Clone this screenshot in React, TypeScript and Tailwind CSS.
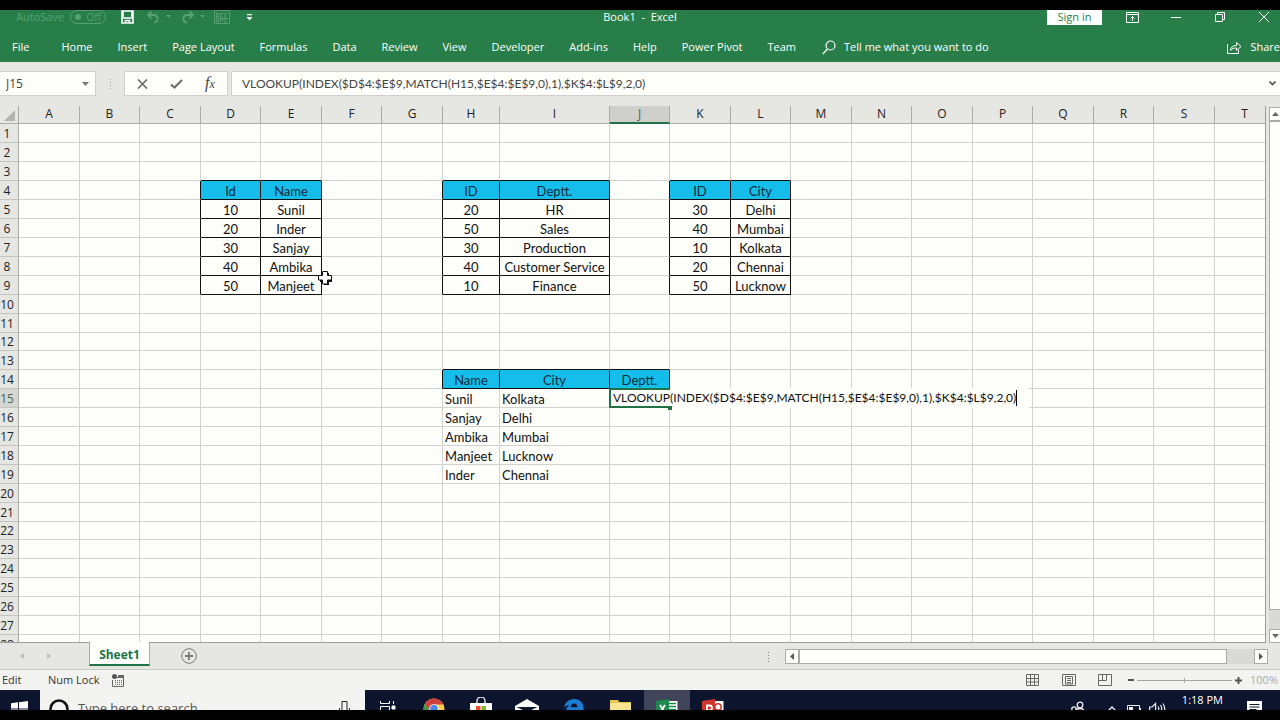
import React, { useState } from 'react';

const FORMULA = 'VLOOKUP(INDEX($D$4:$E$9,MATCH(H15,$E$4:$E$9,0),1),$K$4:$L$9,2,0)';

const MENU = ['Home', 'Insert', 'Page Layout', 'Formulas', 'Data', 'Review', 'View', 'Developer', 'Add-ins', 'Help', 'Power Pivot', 'Team'];

const COLUMNS: [string, string][] = [
  ['A', 'w-[61px]'],
  ['B', 'w-[60px]'],
  ['C', 'w-[61px]'],
  ['D', 'w-[60px]'],
  ['E', 'w-[61px]'],
  ['F', 'w-[60px]'],
  ['G', 'w-[61px]'],
  ['H', 'w-[57px]'],
  ['I', 'w-[110px]'],
  ['J', 'w-[60px]'],
  ['K', 'w-[61px]'],
  ['L', 'w-[60px]'],
  ['M', 'w-[61px]'],
  ['N', 'w-[60px]'],
  ['O', 'w-[61px]'],
  ['P', 'w-[60px]'],
  ['Q', 'w-[61px]'],
  ['R', 'w-[60px]'],
  ['S', 'w-[61px]'],
  ['T', 'w-[60px]'],
];

type Block = { col: number; row: number; boxed: boolean; data: string[][] };

// First row of every block is its header
const BLOCKS: Block[] = [
  { col: 3, row: 4, boxed: true, data: [['Id', 'Name'], ['10', 'Sunil'], ['20', 'Inder'], ['30', 'Sanjay'], ['40', 'Ambika'], ['50', 'Manjeet']] },
  { col: 7, row: 4, boxed: true, data: [['ID', 'Deptt.'], ['20', 'HR'], ['50', 'Sales'], ['30', 'Production'], ['40', 'Customer Service'], ['10', 'Finance']] },
  { col: 10, row: 4, boxed: true, data: [['ID', 'City'], ['30', 'Delhi'], ['40', 'Mumbai'], ['10', 'Kolkata'], ['20', 'Chennai'], ['50', 'Lucknow']] },
  { col: 7, row: 14, boxed: false, data: [['Name', 'City', 'Deptt.'], ['Sunil', 'Kolkata'], ['Sanjay', 'Delhi'], ['Ambika', 'Mumbai'], ['Manjeet', 'Lucknow'], ['Inder', 'Chennai']] },
];

function getCell(col: number, row: number) {
  for (const b of BLOCKS) {
    const text = b.data[row - b.row]?.[col - b.col];
    if (text !== undefined) {
      const header = row === b.row;
      return { text, header, boxed: header || b.boxed };
    }
  }
  return { text: '', header: false, boxed: false };
}

function TitleBar() {
  return (
    <div className="h-[14px] flex items-center text-[11px] relative">
      <div className="flex items-center pl-4 text-[#57a074]">
        <span className="w-[54px]">AutoSave</span>
        <button className="flex items-center justify-between w-9 h-[14px] rounded-full border border-[#57a074] pl-1 pr-1 text-[10px] leading-none">
          <span className="size-[6px] rounded-full bg-[#57a074]" />
          Off
        </button>
      </div>
      <button aria-label="Save" className="ml-[15px]">
        <svg width="13" height="14" viewBox="0 0 13 14" fill="none" stroke="#fff" strokeWidth="1.6">
          <path d="M1 1h11v12H1zM1 8h11M4.500 13V10.500h4V13" />
          <path d="M2 1v6M11 1v6" />
        </svg>
      </button>
      <button aria-label="Undo" className="ml-3 flex items-center gap-1">
        <svg width="16" height="14" viewBox="0 0 16 14" fill="none" stroke="#57a074" strokeWidth="1.8">
          <path d="M5.500 1.500 2 5l3.500 3.500M2 5h6.500a3.800 3.800 0 0 1 0 7.500H8" />
        </svg>
        <svg width="6" height="4" viewBox="0 0 6 4" fill="#57a074"><path d="M0 0h5L2.500 3z" /></svg>
      </button>
      <button aria-label="Redo" className="ml-2 flex items-center gap-1">
        <svg width="16" height="14" viewBox="0 0 16 14" fill="none" stroke="#57a074" strokeWidth="1.8">
          <path d="M9.500 1.500 13 5l-3.500 3.500M13 5H6.500a3.800 3.800 0 0 0 0 7.500H7" />
        </svg>
        <svg width="6" height="4" viewBox="0 0 6 4" fill="#57a074"><path d="M0 0h5L2.500 3z" /></svg>
      </button>
      <button aria-label="Insert cells" className="ml-2">
        <svg width="16" height="14" viewBox="0 0 16 14" fill="none" stroke="#57a074">
          <path d="M.5.5h15v13H.5zM2.500 3h2v2h-2zM2.500 6.500h2V12h-2zM6.500 3v9M6.500 3.500h3M13 3.500h-2v7M9 8.500h5M9.500 10.500 11 12.500l1.500-2M8 6.500v4" />
        </svg>
      </button>
      <button aria-label="Customize toolbar" className="ml-4">
        <svg width="7" height="7" viewBox="0 0 7 7" fill="#fff"><path d="M1 0h5v1.300H1zM.5 3h6L3.500 6.500z" /></svg>
      </button>
      <h1 className="absolute left-1/2 -translate-x-1/2 whitespace-pre">Book1  -  Excel</h1>
      <div className="ml-auto flex items-center pr-[11px]">
        <button className="w-[55px] h-[15px] bg-white text-[#287e48] leading-[14px]">Sign in</button>
        <button aria-label="Ribbon display options" className="ml-6">
          <svg width="13" height="11" viewBox="0 0 13 11" fill="none" stroke="#fff">
            <path d="M.5.5h12v10H.5zM.5 2.500h12M6.500 9V4.500M4.500 6.500l2-2 2 2" />
          </svg>
        </button>
        <button aria-label="Minimize" className="ml-8">
          <svg width="10" height="10" viewBox="0 0 10 10" stroke="#fff"><path d="M0 5.500h10" /></svg>
        </button>
        <button aria-label="Restore" className="ml-[34px]">
          <svg width="10" height="10" viewBox="0 0 10 10" fill="none" stroke="#fff"><path d="M.5 2.500h7v7h-7zM2.500 2.500v-2h7v7h-2" /></svg>
        </button>
        <button aria-label="Close" className="ml-[34px]">
          <svg width="10" height="10" viewBox="0 0 10 10" stroke="#fff"><path d="M0 0l10 10M10 0 0 10" /></svg>
        </button>
      </div>
    </div>
  );
}

function MenuBar() {
  return (
    <nav className="mt-2 h-[30px] pt-px flex items-center text-[11px] whitespace-nowrap">
      <button className="pl-3 pr-4">File</button>
      <div className="flex pl-4 gap-[25px]">
        {MENU.map((m) => (
          <button key={m}>{m}</button>
        ))}
      </div>
      <button className="ml-[26px] flex items-center gap-2">
        <svg width="14" height="15" viewBox="0 0 14 15" fill="none" stroke="#fff" strokeWidth="1.200">
          <circle cx="8.500" cy="5.500" r="4.500" />
          <path d="M5.500 9 .8 14" />
        </svg>
        Tell me what you want to do
      </button>
      <button className="ml-auto flex items-center gap-2">
        <svg width="15" height="13" viewBox="0 0 15 13" fill="none" stroke="#fff">
          <path d="M.5 3v9.500h11V9M3.500 9.500c.3-3.500 2.500-5 6-5V1.500L14 5.500l-4.500 4V7c-3 0-4.500.5-6 2.500z" />
        </svg>
        Share
      </button>
    </nav>
  );
}

function FormulaBar({ value, onChange }: { value: string; onChange: (v: string) => void }) {
  return (
    <div className="flex items-stretch h-[25px] mt-[9px] text-[#444]">
      <div className="flex items-center w-24 bg-[#fefefa] border border-l-0 border-[#cfcfcd]">
        <input aria-label="Name box" defaultValue="J15" className="w-[82px] pl-[6px] text-xs outline-none" />
        <svg width="7" height="4" viewBox="0 0 7 4" fill="#777"><path d="M0 0h7L3.500 4z" /></svg>
      </div>
      <div className="w-7 flex flex-col items-center justify-center gap-[2px]">
        <span className="size-px bg-[#999]" />
        <span className="size-px bg-[#999]" />
        <span className="size-px bg-[#999]" />
        <span className="size-px bg-[#999]" />
      </div>
      <div className="flex items-center w-[104px] bg-[#fefefa] border border-[#cfcfcd]">
        <button aria-label="Cancel" className="flex-1 flex justify-center">
          <svg width="11" height="10" viewBox="0 0 11 10" stroke="#6e6e6e" strokeWidth="1.700"><path d="M1 .5 10 9.500M10 .5 1 9.500" /></svg>
        </button>
        <button aria-label="Enter" className="flex-1 flex justify-center">
          <svg width="13" height="10" viewBox="0 0 13 10" fill="none" stroke="#6e6e6e" strokeWidth="2.200"><path d="M1 5.500 4.500 8.500 12 1" /></svg>
        </button>
        <button aria-label="Insert function" className="flex-1 font-['Liberation_Serif',serif] italic text-base leading-none">
          f<span className="text-xs">x</span>
        </button>
      </div>
      <div className="ml-[3px] flex-1 flex items-center bg-[#fefefa] border border-r-0 border-[#cfcfcd]">
        <input
          aria-label="Formula bar"
          value={value}
          onChange={(e) => onChange(e.target.value)}
          className="flex-1 pl-[10px] pt-px font-['Lato',sans-serif] text-xs outline-none"
        />
        <button aria-label="Expand formula bar" className="pr-1">
          <svg width="7" height="5" viewBox="0 0 7 5" fill="none" stroke="#555" strokeWidth="1.600"><path d="M.5.5l3 3 3-3" /></svg>
        </button>
      </div>
    </div>
  );
}

function CellEditor({ value, onChange }: { value: string; onChange: (v: string) => void }) {
  return (
    <div className="absolute -left-px -top-px z-10 h-5 flex items-center bg-[#fefefa] pr-3">
      <div className="absolute left-0 top-0 w-[61px] h-5 border-2 border-r-0 border-[#217346]" />
      <span className="absolute left-[59px] top-[18px] size-1 bg-[#217346]" />
      <input
        aria-label="Cell J15"
        value={value}
        onChange={(e) => onChange(e.target.value)}
        className="relative field-sizing-content pl-[4px] text-xs leading-4 outline-none"
      />
      <span className="w-px h-4 bg-black" />
    </div>
  );
}

function CrossCursor() {
  return (
    <svg className="absolute -left-1 -top-[5px] z-10" width="15" height="15" viewBox="0 0 15 15">
      <path d="M6 2h5v4h3v5h-3v3H6v-3H2V6h4z" fill="#111" />
      <path d="M4.500.5h5v4h4v4.500h-4v4h-5v-4h-4V4.500h4z" fill="#fff" stroke="#111" />
    </svg>
  );
}

function Grid({ value, onChange }: { value: string; onChange: (v: string) => void }) {
  return (
    <div className="flex-1 min-w-0 overflow-hidden border-r border-b border-[#9b9b9b] bg-[#fefefa]">
      <table className="table-fixed w-0 border-separate border-spacing-0">
        <thead>
          <tr className="h-[18px] bg-[#e6e6e3] text-xs">
            <th className="w-[19px] p-0 border-r border-b border-[#ababab] align-bottom">
              <svg className="ml-auto mr-[3px] mb-[2px]" width="11" height="11" viewBox="0 0 11 11" fill="#b4b4b2"><path d="M11 0v11H0z" /></svg>
            </th>
            {COLUMNS.map(([name, width]) => (
              <th
                key={name}
                className={`${width} p-0 font-normal leading-4 border-r border-b align-top ${
                  name === 'J' ? 'bg-[#cfcfcc] text-[#3f6b51] border-r-[#ababab] border-b-[#217346] border-b-2' : 'border-[#ababab] text-[#222]'
                }`}
              >
                {name}
              </th>
            ))}
          </tr>
        </thead>
        <tbody>
          {Array.from({ length: 28 }, (_, i) => i + 1).map((row) => (
            <tr key={row} className={row === 12 || row === 22 ? 'h-[18px]' : 'h-[19px]'}>
              <th
                className={`p-0 pt-px pr-1 text-center text-xs font-normal leading-4 border-r border-b border-[#c4c4c2] border-r-[#ababab] ${
                  row === 15 ? 'bg-[#d6d6d3] text-[#3f6b51]' : 'bg-[#e6e6e3] text-[#222]'
                }`}
              >
                {row}
              </th>
              {COLUMNS.map(([name], col) => {
                const cell = getCell(col, row);
                const right = cell.boxed || getCell(col + 1, row).boxed;
                const bottom = cell.boxed || getCell(col, row + 1).boxed;
                return (
                  <td
                    key={name}
                    className={`p-0 pt-px relative font-['Lato',sans-serif] text-[13px] leading-4 whitespace-nowrap border-r border-b ${
                      right ? 'border-r-[#111]' : 'border-r-[#d2d2cf]'
                    } ${bottom ? 'border-b-[#111]' : 'border-b-[#d2d2cf]'} ${cell.header ? 'bg-[#14bdea] text-[#0d2b3a]' : 'text-[#111]'} ${
                      cell.boxed ? 'text-center' : 'pl-[2px]'
                    }`}
                  >
                    {cell.text}
                    {name === 'J' && row === 15 && <CellEditor value={value} onChange={onChange} />}
                    {name === 'F' && row === 9 && <CrossCursor />}
                  </td>
                );
              })}
            </tr>
          ))}
        </tbody>
      </table>
    </div>
  );
}

function VerticalScroll() {
  return (
    <div className="w-[14px] pl-[3px] flex flex-col overflow-hidden">
      <button aria-label="Scroll up" className="w-[13px] h-[14px] mt-px flex items-center justify-center bg-[#fefefa] border border-[#ababab]">
        <svg width="7" height="4" viewBox="0 0 7 4" fill="#666"><path d="M0 4h7L3.500 0z" /></svg>
      </button>
      <div className="w-[13px] flex-1 bg-[#d9d9d6] pb-[19px]">
        <div className="h-full bg-[#fefefa] border border-[#ababab]" />
      </div>
      <button aria-label="Scroll down" className="w-[13px] h-[14px] flex items-center justify-center bg-[#fefefa] border border-[#ababab]">
        <svg width="7" height="4" viewBox="0 0 7 4" fill="#666"><path d="M0 0h7L3.500 4z" /></svg>
      </button>
    </div>
  );
}

function SheetTabs() {
  return (
    <div className="h-[26px] flex items-start">
      <div className="w-[89px] h-[25px] flex items-center pl-5 gap-[22px]">
        <svg width="5" height="6" viewBox="0 0 5 6" fill="#bdbdbb"><path d="M4 0v6L0 3z" /></svg>
        <svg width="5" height="6" viewBox="0 0 5 6" fill="#bdbdbb"><path d="M0 0v6l4-3z" /></svg>
      </div>
      <button className="w-[61px] h-6 -mt-px pt-1 bg-[#fefefa] border-x border-[#ababab] border-b-2 border-b-[#217346] text-[#217346] text-xs font-bold">Sheet1</button>
      <button aria-label="New sheet" className="ml-[31px] mt-[5px]">
        <svg width="16" height="16" viewBox="0 0 16 16" fill="none" stroke="#7a7a7a">
          <circle cx="8" cy="8" r="7.300" />
          <path d="M8 4v8M4 8h8" strokeWidth="1.800" />
        </svg>
      </button>
      <div className="ml-auto mt-[6px] flex items-center">
        <div className="flex flex-col gap-[2px] mr-4">
          <span className="size-px bg-[#888]" />
          <span className="size-px bg-[#888]" />
          <span className="size-px bg-[#888]" />
          <span className="size-px bg-[#888]" />
        </div>
        <button aria-label="Scroll left" className="w-[14px] h-[15px] flex items-center justify-center bg-[#fefefa] border border-[#ababab]">
          <svg width="4" height="7" viewBox="0 0 4 7" fill="#555"><path d="M4 0v7L0 3.500z" /></svg>
        </button>
        <div className="w-[455px] h-[15px] bg-[#d9d9d6] pr-[27px]">
          <div className="h-full bg-[#fefefa] border border-[#ababab]" />
        </div>
        <button aria-label="Scroll right" className="w-[14px] h-[15px] mr-3 flex items-center justify-center bg-[#fefefa] border border-[#ababab]">
          <svg width="4" height="7" viewBox="0 0 4 7" fill="#555"><path d="M0 0v7l4-3.500z" /></svg>
        </button>
      </div>
    </div>
  );
}

function StatusBar() {
  return (
    <div className="h-[21px] flex items-center bg-[#f3f3f1] border-t border-[#c9c9c6] text-[11px] text-[#333]">
      <span className="w-12 pl-[2px]">Edit</span>
      <span className="w-16">Num Lock</span>
      <svg width="12" height="13" viewBox="0 0 12 13" fill="none">
        <path d="M5 3.500h6.500v9H.5V6" stroke="#666" />
        <path d="M6 1h6v3H6z" fill="#666" />
        <path d="M3 6.500h7M3 8.500h7M3 10.500h7" stroke="#666" strokeDasharray="1 1" />
        <circle cx="2.500" cy="2.500" r="2.500" fill="#555" />
      </svg>
      <div className="ml-auto flex items-center pr-[2px]">
        <button aria-label="Normal view">
          <svg width="13" height="12" viewBox="0 0 13 12" fill="none" stroke="#666"><path d="M.5.5h12v11H.5zM4.500.5v11M8.500.5v11M.5 4.500h12M.5 8h12" /></svg>
        </button>
        <button aria-label="Page layout view" className="ml-[23px]">
          <svg width="14" height="12" viewBox="0 0 14 12" fill="none" stroke="#666"><path d="M.5.5h13v11H.5zM3.500 2.500h7v7.500h-7zM5 4.500h4M5 6.500h4M5 8.500h4" /></svg>
        </button>
        <button aria-label="Page break view" className="ml-[22px]">
          <svg width="14" height="12" viewBox="0 0 14 12" fill="none" stroke="#666"><path d="M.5.5h13v11H.5zM4.500.5v6M.5 6.500h8v-6" /></svg>
        </button>
        <button aria-label="Zoom out" className="ml-4 w-[6px] h-[2px] bg-[#555]" />
        <div className="mx-[3px] w-[95px] h-px bg-[#a5a5a3] flex items-center justify-center">
          <span className="w-px h-[5px] shrink-0 bg-[#a5a5a3]" />
        </div>
        <button aria-label="Zoom in">
          <svg width="7" height="7" viewBox="0 0 7 7" stroke="#555" strokeWidth="2"><path d="M3.500 0v7M0 3.500h7" /></svg>
        </button>
        <span className="ml-2 text-[#a9a9a7]">100%</span>
      </div>
    </div>
  );
}

const ICON = 'w-[46px] h-full flex items-center justify-center';

function Taskbar() {
  return (
    <div className="h-5 overflow-hidden bg-[#0d142e]">
      <div className="h-[38px] flex items-stretch">
        <button aria-label="Start" className="w-10 flex items-center justify-center pr-[6px]">
          <svg className="ml-1" width="17" height="16" viewBox="0 0 17 16" fill="#fff">
            <path d="M0 2.300 7 1.300v6.200H0zM8 1.200 17 0v7.500H8zM0 8.500h7v6.200L0 13.700zM8 8.500h9V16l-9-1.200z" />
          </svg>
        </button>
        <div className="w-[325px] flex items-center bg-[#f3f3f1] pl-2">
          <svg width="22" height="22" viewBox="0 0 22 22" fill="none" stroke="#111" strokeWidth="2.600"><circle cx="11" cy="11" r="8.500" /></svg>
          <input aria-label="Search" placeholder="Type here to search" className="ml-2 flex-1 text-[13px] placeholder:text-[#555] outline-none" />
          <svg className="mr-[15px]" width="11" height="18" viewBox="0 0 11 18" fill="none" stroke="#222"><path d="M3 1.500h5v9H3zM.5 8v4.500h10V8M5.500 12.500V17" /></svg>
        </div>
        <div className="w-[371px] flex justify-between">
          <button aria-label="Task view" className={ICON}>
            <svg width="16" height="16" viewBox="0 0 16 16" fill="none" stroke="#fff"><path d="M.5 0v2.500h9V0M.5 5.500h9v6h-9zM.5 16v-2.500h9V16M13.500 0v3M13.500 10v6" /><path d="M12 5h3v3h-3z" fill="#fff" /></svg>
          </button>
          <button aria-label="Chrome" className={ICON}>
            <svg width="22" height="22" viewBox="0 0 22 22">
              <circle cx="11" cy="11" r="10.500" fill="#f7cf45" />
              <path d="M1.900 5.750A10.500 10.500 0 0 1 20.500 6.500H11L6.800 13.500z" fill="#d0403c" />
              <path d="M1.900 5.750A10.500 10.500 0 0 0 10 21.500l5-8.200-8.500-.5z" fill="#3d9b4f" />
              <circle cx="11" cy="11" r="4.800" fill="#fff" />
              <circle cx="11" cy="11" r="3.900" fill="#4a86ec" />
            </svg>
          </button>
          <button aria-label="Store" className={ICON}>
            <svg width="22" height="24" viewBox="0 0 22 24">
              <path d="M7 7V4a4 4 0 0 1 8 0v3" fill="none" stroke="#ddd" strokeWidth="1.500" />
              <path d="M0 6h22v15l-22 2z" fill="#fff" />
              <path d="M6 9h4.500v4.500H6z" fill="#e8502a" /><path d="M11.500 9H16v4.500h-4.500z" fill="#82b92c" />
              <path d="M6 14.500h4.500V19H6z" fill="#2aa5e0" /><path d="M11.500 14.500H16V19h-4.500z" fill="#f5ba2d" />
            </svg>
          </button>
          <button aria-label="Mail" className={ICON}>
            <svg width="24" height="20" viewBox="0 0 24 20"><path d="M0 7 12 0l12 7v12H0z" fill="#fff" /><path d="M1.500 8 12 13l10.500-5" fill="#0d142e" /></svg>
          </button>
          <button aria-label="Edge" className={ICON}>
            <svg width="20" height="20" viewBox="0 0 20 20" fill="#1a7fd4">
              <path d="M0 8.500C1 3.500 5 0 10 0c6 0 9.500 4 9.500 9v2.500H6.500c0 3 2.500 4.500 5.500 4.500 2.500 0 4.500-.5 6.500-1.500v4C16.500 19.500 14 20 11 20 5.500 20 2 17 2 12c0-2.500 1.500-5 4-6C3.500 6 1.500 7 0 8.500zm6.500-.3h7C13.500 6 12 4.500 10 4.500S7 6 6.500 8.200z" />
            </svg>
          </button>
          <button aria-label="File Explorer" className={ICON}>
            <svg width="21" height="18" viewBox="0 0 21 18"><path d="M0 0h8l1.500 2H21v16H0z" fill="#e3c356" /><path d="M1.500 3H21v15H0V4z" fill="#f8e391" /></svg>
          </button>
          <button aria-label="Excel" className={`${ICON} bg-[#3f445b]`}>
            <svg width="22" height="20" viewBox="0 0 22 20">
              <path d="M11 2h10.500v16H11z" fill="#fff" /><path d="M13 4.500h7M13 7.500h7M13 10.500h7M13 13.500h7" stroke="#1f8a4c" strokeWidth="1.500" />
              <path d="M0 2 13 0v20L0 18z" fill="#1f8a4c" /><path d="m4 6 5 8M9 6l-5 8" stroke="#fff" strokeWidth="1.800" />
            </svg>
          </button>
          <button aria-label="PowerPoint" className={ICON}>
            <svg width="22" height="20" viewBox="0 0 22 20">
              <path d="M11 2h10.500v16H11z" fill="#fff" /><circle cx="16" cy="8" r="3.200" fill="none" stroke="#d0342a" strokeWidth="1.500" />
              <path d="M0 2 13 0v20L0 18z" fill="#d0342a" /><path d="M5 15V6.500h2.500a2.300 2.300 0 0 1 0 5H5" fill="none" stroke="#fff" strokeWidth="1.800" />
            </svg>
          </button>
        </div>
        <div className="ml-auto flex items-center pr-[18px]">
          <svg className="mr-[22px]" width="15" height="16" viewBox="0 0 15 16" fill="none" stroke="#eee" strokeWidth="1.300"><circle cx="10" cy="4" r="2.800" /><path d="M5.500 12c0-6 9-6 9 0" /><circle cx="4" cy="8" r="2.200" /><path d="M.7 15c0-5 6.500-5 6.500 0" /></svg>
          <svg className="mr-[10px]" width="10" height="6" viewBox="0 0 10 6" fill="none" stroke="#eee" strokeWidth="1.400"><path d="M.5 5.500 5 1l4.500 4.500" /></svg>
          <svg className="mr-2" width="14" height="9" viewBox="0 0 14 9" fill="none" stroke="#eee"><path d="M.5.5h12v8H.5z" /><path d="M2 2h4v5H2zM13 3h1v3h-1z" fill="#eee" stroke="none" /></svg>
          <svg className="mr-4" width="17" height="14" viewBox="0 0 17 14" fill="none" stroke="#eee" strokeWidth="1.200"><path d="M.6 5v4h2.500l3.500 3.500v-11L3.100 5zM9 4.500q1.500 2.500 0 5M11.500 3q2.500 4 0 8M14 1.500q3.500 5.500 0 11" /></svg>
          <span className="self-start pt-[2px] text-[11px] text-white">1:18 PM</span>
          <svg className="ml-6" width="15" height="16" viewBox="0 0 15 16"><path d="M0 0h15v12H8l-4 4v-4H0z" fill="#fff" /><path d="M2.500 3.500h10M2.500 6h10M2.500 8.500h7" stroke="#0d142e" /></svg>
        </div>
      </div>
    </div>
  );
}

export default function App() {
  const [formula, setFormula] = useState(FORMULA);

  return (
    <div className="h-screen flex flex-col overflow-hidden bg-[#e6e6e3] border-y-[10px] border-black font-['Open_Sans','Noto_Sans',sans-serif]">
      <header className="bg-[#287e48] text-white">
        <TitleBar />
        <MenuBar />
      </header>
      <FormulaBar value={formula} onChange={setFormula} />
      <main className="flex-1 min-h-0 flex pt-[10px]">
        <Grid value={formula} onChange={setFormula} />
        <VerticalScroll />
      </main>
      <SheetTabs />
      <StatusBar />
      <Taskbar />
    </div>
  );
}
